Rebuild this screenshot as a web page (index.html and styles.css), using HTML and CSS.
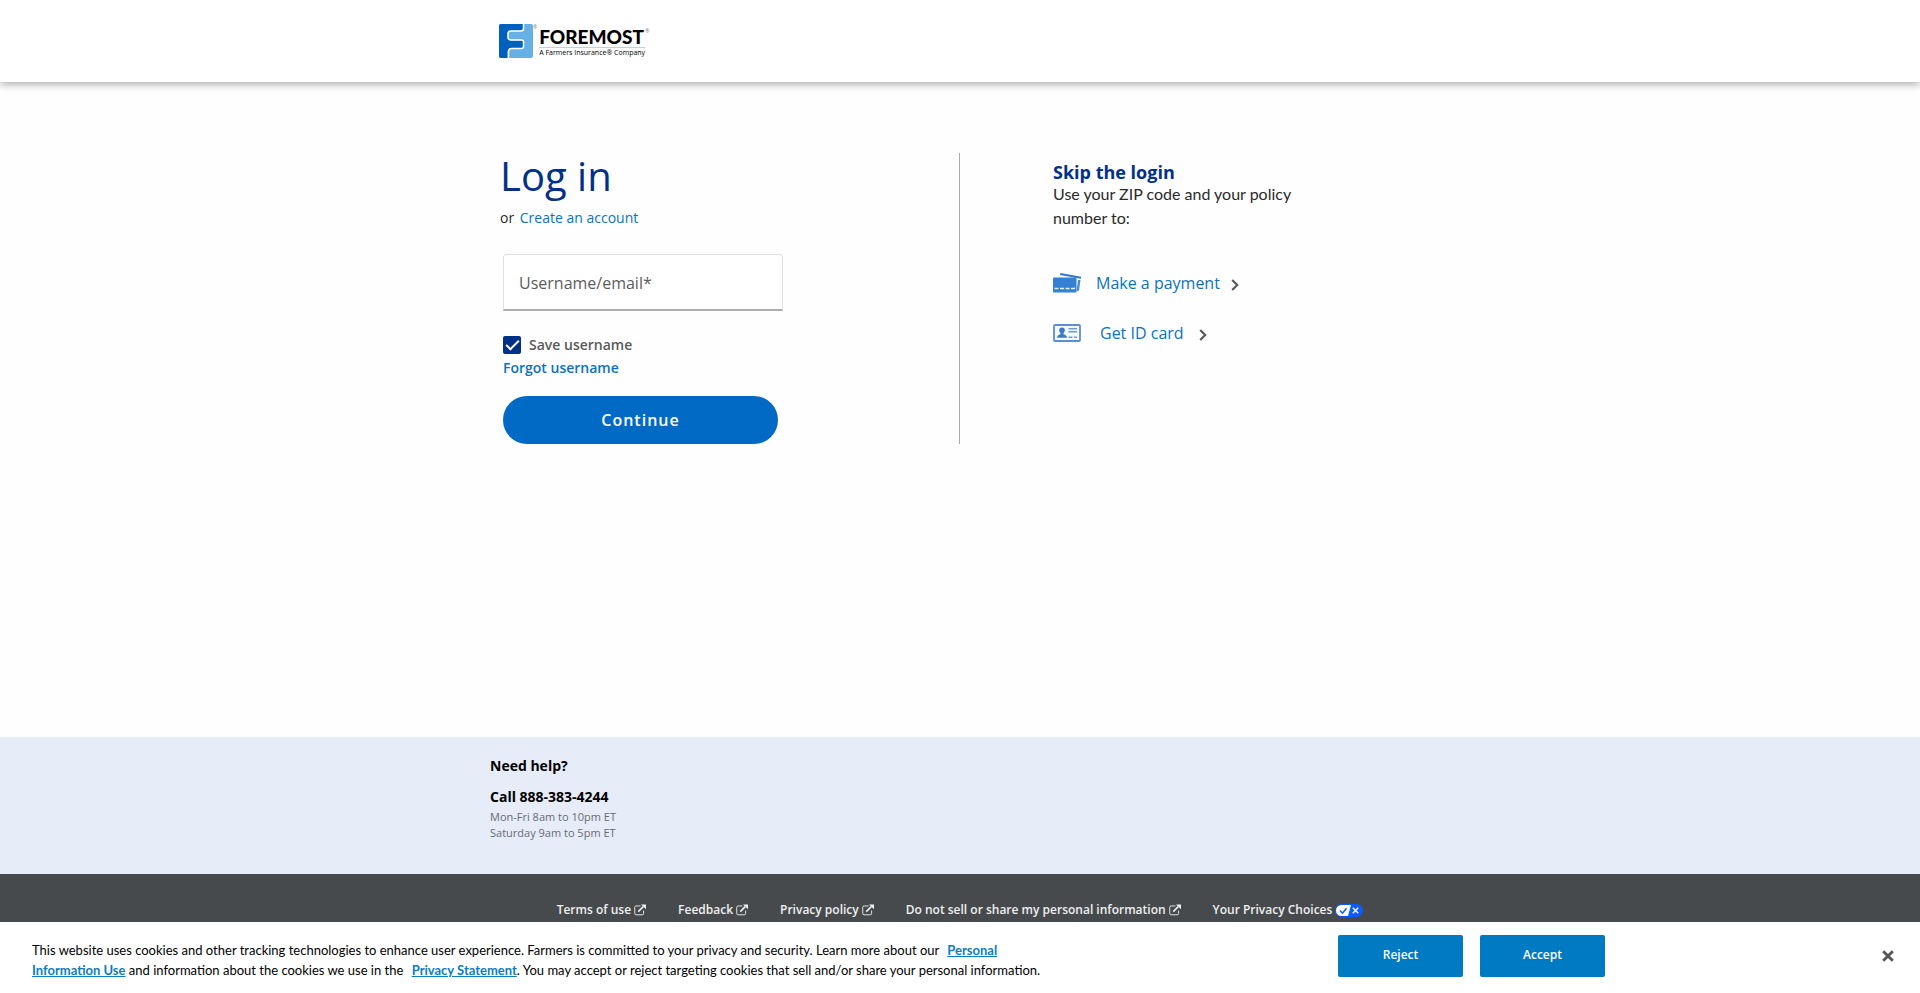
FILE: index.html
```html
<!DOCTYPE html>
<html lang="en">
<head>
<meta charset="utf-8">
<meta name="viewport" content="width=device-width, initial-scale=1">
<title>Log in | Foremost</title>
<link rel="stylesheet" href="styles.css">
</head>
<body>
<svg class="sprite" aria-hidden="true">
  <symbol id="external" viewBox="0 0 13 12">
    <path d="M7 1.600H2.300A1.500 1.500 0 0 0 .8 3.100v6.600a1.500 1.500 0 0 0 1.500 1.500h6.600a1.500 1.500 0 0 0 1.500-1.500V6.600" fill="none" stroke="currentColor" stroke-width="1"/>
    <path d="M4.600 7.800 10 2.400" fill="none" stroke="currentColor" stroke-width="1.700"/>
    <path d="M7.600 0H13v5.200z" fill="currentColor"/>
  </symbol>
  <symbol id="chevron" viewBox="0 0 8 12">
    <path d="m1.200 1 5 5-5 5" fill="none" stroke="currentColor" stroke-width="2.200"/>
  </symbol>
</svg>

<header class="header">
  <div class="container header-inner">
    <a class="logo" href="#">
      <svg class="logo-mark" viewBox="0 0 34 34" aria-hidden="true">
        <rect width="34" height="34" rx="2" fill="#65b1e6"/>
        <path d="M2 0h22v4.500q0 2-2 2H12q-3.500 0-3.500 3.500v3.500q0 3 3 3h11.500q1.500 0 1.500 1.500v5q0 1.500-1.500 1.500H12q-3.500 0-3.500 3.500v6H2a2 2 0 0 1-2-2V2a2 2 0 0 1 2-2z" fill="#0061bd"/>
        <path d="M24.500 0v4.500q0 2.500-2.500 2.500H12Q9 7 9 10v3q0 3 3 3h10.500q2 0 2 2v4.500q0 2-2 2H12.500q-3 0-3 3V34" fill="none" stroke="#fff" stroke-width="1.500"/>
      </svg>
      <span class="logo-reg">®</span>
      <span class="logo-text">
        <span class="logo-name">FOREMOST</span>
        <span class="logo-tag">A Farmers Insurance® Company</span>
      </span>
      <span class="logo-reg logo-reg-name">®</span>
    </a>
  </div>
</header>

<main class="main">
  <div class="container columns">
    <section class="login">
      <h1>Log in</h1>
      <p class="create">or <a href="#">Create an account</a></p>
      <form>
        <input class="field" type="text" placeholder="Username/email*" aria-label="Username/email">
        <label class="save"><input type="checkbox" checked><span>Save username</span></label>
        <a class="forgot" href="#">Forgot username</a>
        <button class="continue" type="button">Continue</button>
      </form>
    </section>
    <section class="skip">
      <h2>Skip the login</h2>
      <p>Use your ZIP code and your policy number to:</p>
      <a class="action" href="#">
        <svg class="action-icon" viewBox="0 0 28 20" aria-hidden="true">
          <path d="M7.500 0 28 3.800v2L7 2z" fill="#2f76c8"/>
          <path d="M25 7h2.500l-1.500 10.500-2.500 1z" fill="#4c8ad0"/>
          <rect y="4.500" width="23.500" height="15" rx="1" fill="#3480d2"/>
          <path d="M1.500 15.500h21" stroke="#e4effb" stroke-width="1.600" stroke-dasharray="4 1.500"/>
        </svg>
        <span>Make a payment</span>
        <svg class="chevron" aria-hidden="true"><use href="#chevron"/></svg>
      </a>
      <a class="action action-id" href="#">
        <svg class="action-icon" viewBox="0 0 28 20" aria-hidden="true">
          <rect x="1" y="2" width="26" height="16" rx="1" fill="#f4f9ff" stroke="#5b8fd2" stroke-width="1.800"/>
          <circle cx="9" cy="7.300" r="2.800" fill="#3d79c6"/>
          <path d="M4 14.800q.3-3 3.500-3.500V9h3v2.300q3.200.5 3.500 3.500z" fill="#3d79c6"/>
          <path d="M15.500 5.800h8.500M15.500 8.800h8.500M15.500 14.300h4M21 14.300h3" stroke="#6d9bd6" stroke-width="1.400"/>
        </svg>
        <span>Get ID card</span>
        <svg class="chevron" aria-hidden="true"><use href="#chevron"/></svg>
      </a>
    </section>
  </div>
</main>

<section class="help">
  <div class="container">
    <h3>Need help?</h3>
    <p class="call">Call 888-383-4244</p>
    <p class="hours">Mon-Fri 8am to 10pm ET<br>Saturday 9am to 5pm ET</p>
  </div>
</section>

<footer class="footer">
  <nav class="footer-links">
    <a href="#">Terms of use <svg class="ext" aria-hidden="true"><use href="#external"/></svg></a>
    <a href="#">Feedback <svg class="ext" aria-hidden="true"><use href="#external"/></svg></a>
    <a href="#">Privacy policy <svg class="ext" aria-hidden="true"><use href="#external"/></svg></a>
    <a href="#">Do not sell or share my personal information <svg class="ext" aria-hidden="true"><use href="#external"/></svg></a>
    <a href="#">Your Privacy Choices
      <svg class="choices" viewBox="0 0 28 13" aria-hidden="true">
        <rect width="28" height="13" rx="6.500" fill="#0a5cff"/>
        <path d="M6.500 1H16l-3 11H6.500a5.500 5.500 0 0 1 0-11z" fill="#fff"/>
        <path d="m5 6.500 2.500 2.700 4-5" fill="none" stroke="#0a5cff" stroke-width="1.500"/>
        <path d="m17.800 3.800 5.400 5.400m0-5.400-5.400 5.400" stroke="#fff" stroke-width="1.400"/>
      </svg>
    </a>
  </nav>
</footer>

<aside class="cookies" aria-label="Cookie notice">
  <p>This website uses cookies and other tracking technologies to enhance user experience. Farmers is committed to your privacy and security. Learn more about our <a href="#">Personal Information Use</a> and information about the cookies we use in the <a href="#">Privacy Statement</a>. You may accept or reject targeting cookies that sell and/or share your personal information.</p>
  <div class="cookie-buttons">
    <button type="button">Reject</button>
    <button type="button">Accept</button>
  </div>
  <button class="close" type="button" aria-label="Close">
    <svg viewBox="0 0 12 12" aria-hidden="true"><path d="m1.200 1.200 9.600 9.600m0-9.600-9.600 9.600" stroke="currentColor" stroke-width="2.800"/></svg>
  </button>
</aside>
</body>
</html>
```
FILE: styles.css
```css
*, *::before { box-sizing: border-box; }

body {
  margin: 0;
  min-height: 100vh;
  display: flex;
  flex-direction: column;
  font-family: "Open Sans", sans-serif;
  font-size: 14px;
  line-height: 20px;
  color: #2a2a2a;
  background: #fefefe;
}

h1, h2, h3, p { margin: 0; }
a { color: #0b72be; text-decoration: none; }
button, input { font: inherit; }
.sprite { display: none; }

.container {
  width: 100%;
  max-width: 940px;
  margin: 0 auto;
}

/* Header */
.header {
  background: #fff;
  box-shadow: 0 2px 8px rgba(0, 0, 0, .35);
}
.header-inner { padding: 24px 9px; }
.logo { display: flex; width: max-content; height: 34px; color: #000; }
.logo-mark { width: 34px; height: 34px; }
.logo-reg {
  font-size: 5px;
  line-height: 6px;
  color: #777;
}
.logo-reg-name { padding-top: 4px; }
.logo-text {
  display: flex;
  flex-direction: column;
  padding: 3px 0 0 2px;
  font-family: Lato, sans-serif;
}
.logo-name {
  font-size: 19px;
  font-weight: 900;
  line-height: 20px;
  border-bottom: 1px solid #b5d5ec;
}
.logo-tag {
  font-family: "Open Sans", sans-serif;
  font-size: 7px;
  line-height: 10px;
}

/* Login */
.main { flex: 1; padding: 71px 0; }
.columns { display: grid; grid-template-columns: 1fr 1fr; }
.login {
  padding-left: 10px;
  border-right: 1px solid #a9a9a9;
}
h1 {
  font-size: 40px;
  font-weight: 400;
  line-height: 46px;
  color: #003087;
}
.create { margin-top: 9px; line-height: 20px; }
.create a { margin-left: 2px; }
form {
  display: flex;
  flex-direction: column;
  align-items: flex-start;
  padding: 26px 0 0 3px;
}
.field {
  width: 280px;
  height: 57px;
  padding: 1px 15px 0;
  font-size: 16px;
  color: #333;
  background: #fff;
  border: 1px solid #e0e0e0;
  border-bottom: 2px solid #adadad;
  border-radius: 4px 4px 0 0;
}
.field::placeholder { color: #5c5c5c; opacity: 1; }
.save {
  display: flex;
  align-items: center;
  gap: 8px;
  margin-top: 24px;
  font-weight: 600;
  color: #5a5a5a;
}
.save input {
  appearance: none;
  width: 18px;
  height: 18px;
  margin: 0;
  border-radius: 2px;
  background: #003087;
  display: grid;
  place-items: center;
}
.save input:checked::before {
  content: "";
  width: 13px;
  height: 7px;
  margin-bottom: 3px;
  border: solid #fff;
  border-width: 0 0 2px 2px;
  rotate: -45deg;
}
.forgot { margin-top: 3px; font-weight: 600; }
.continue {
  width: 275px;
  height: 48px;
  margin-top: 18px;
  border: 0;
  border-radius: 24px;
  font-size: 16px;
  font-weight: 600;
  letter-spacing: 1px;
  color: #fff;
  background: #006ac4;
}

/* Skip the login */
.skip { padding: 10px 0 0 93px; }
h2 {
  font-size: 18px;
  font-weight: 700;
  line-height: 19px;
  color: #003087;
}
.skip p {
  max-width: 264px;
  font-family: Lato, sans-serif;
  font-size: 16px;
  line-height: 24px;
}
.action {
  display: flex;
  align-items: center;
  width: max-content;
  margin-top: 43px;
  font-size: 16px;
  line-height: 20px;
}
.action-id { margin-top: 30px; }
.action-icon { width: 28px; height: 20px; margin-right: 15px; }
.chevron { width: 8px; height: 12px; margin: 3px 0 0 11px; color: #5a5a5a; }
.action-id .action-icon { margin-right: 19px; }
.action-id .chevron { margin-left: 15px; }

/* Help */
.help { padding: 18px 0 33px; background: #e6edf8; }
h3, .call { font-size: 14px; font-weight: 700; line-height: 22px; color: #000; }
.call { margin-top: 9px; }
.hours { margin-top: 1px; font-size: 11px; line-height: 16px; color: #666b74; }

/* Footer */
.footer { min-height: 119px; padding: 26px 0; background: #464a4c; }
.footer-links { display: flex; justify-content: center; gap: 32px; }
.footer-links a {
  display: flex;
  align-items: center;
  gap: 3px;
  font-size: 12px;
  font-weight: 600;
  color: #f0f0f0;
}
.ext { width: 12px; height: 12px; }
.choices { width: 28px; height: 13px; }

/* Cookie notice */
.cookies {
  position: fixed;
  inset: auto 0 0;
  display: flex;
  align-items: flex-start;
  padding: 13px 26px 13px 32px;
  background: #fff;
  color: #000;
}
.cookies p {
  width: 1020px;
  padding-top: 5px;
  font-family: Lato, sans-serif;
  font-size: 13px;
  line-height: 20px;
}
.cookies p a {
  margin-left: 5px;
  font-weight: 700;
  text-decoration: underline;
  color: #0b7dc4;
}
.cookie-buttons { display: flex; gap: 17px; margin-left: auto; margin-right: 277px; }
.cookie-buttons button {
  width: 125px;
  height: 42px;
  padding: 0 0 2px;
  border: 0;
  border-radius: 2px;
  font-size: 12px;
  font-weight: 600;
  color: #fff;
  background: #007ac3;
}
.close {
  width: 12px;
  height: 12px;
  margin-top: 15px;
  padding: 0;
  border: 0;
  background: none;
  color: #565656;
}
.close svg { display: block; }
```
